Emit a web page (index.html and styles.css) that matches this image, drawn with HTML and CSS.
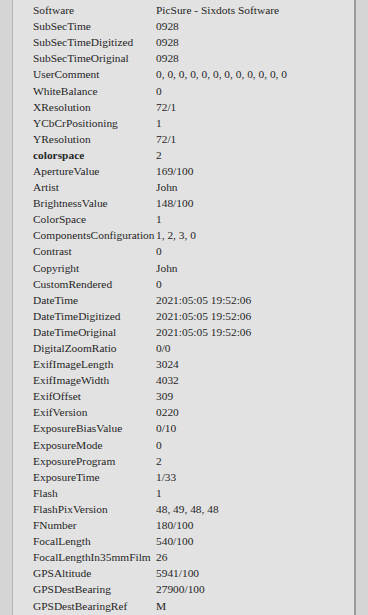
FILE: index.html
```html
<!DOCTYPE html>
<html lang="en">
<head>
  <meta charset="UTF-8" />
  <meta name="viewport" content="width=device-width, initial-scale=1.0"/>
  <title>EXIF data</title>
  <link rel="stylesheet" href="styles.css">
</head>
<body>
  <div class="panel">
    <table class="exif">
      <tr><td>Software</td><td>PicSure - Sixdots Software</td></tr>
      <tr><td>SubSecTime</td><td>0928</td></tr>
      <tr><td>SubSecTimeDigitized</td><td>0928</td></tr>
      <tr><td>SubSecTimeOriginal</td><td>0928</td></tr>
      <tr><td>UserComment</td><td>0, 0, 0, 0, 0, 0, 0, 0, 0, 0, 0, 0</td></tr>
      <tr><td>WhiteBalance</td><td>0</td></tr>
      <tr><td>XResolution</td><td>72/1</td></tr>
      <tr><td>YCbCrPositioning</td><td>1</td></tr>
      <tr><td>YResolution</td><td>72/1</td></tr>
      <tr><td><b>colorspace</b></td><td>2</td></tr>
      <tr><td>ApertureValue</td><td>169/100</td></tr>
      <tr><td>Artist</td><td>John</td></tr>
      <tr><td>BrightnessValue</td><td>148/100</td></tr>
      <tr><td>ColorSpace</td><td>1</td></tr>
      <tr><td>ComponentsConfiguration</td><td>1, 2, 3, 0</td></tr>
      <tr><td>Contrast</td><td>0</td></tr>
      <tr><td>Copyright</td><td>John</td></tr>
      <tr><td>CustomRendered</td><td>0</td></tr>
      <tr><td>DateTime</td><td>2021:05:05 19:52:06</td></tr>
      <tr><td>DateTimeDigitized</td><td>2021:05:05 19:52:06</td></tr>
      <tr><td>DateTimeOriginal</td><td>2021:05:05 19:52:06</td></tr>
      <tr><td>DigitalZoomRatio</td><td>0/0</td></tr>
      <tr><td>ExifImageLength</td><td>3024</td></tr>
      <tr><td>ExifImageWidth</td><td>4032</td></tr>
      <tr><td>ExifOffset</td><td>309</td></tr>
      <tr><td>ExifVersion</td><td>0220</td></tr>
      <tr><td>ExposureBiasValue</td><td>0/10</td></tr>
      <tr><td>ExposureMode</td><td>0</td></tr>
      <tr><td>ExposureProgram</td><td>2</td></tr>
      <tr><td>ExposureTime</td><td>1/33</td></tr>
      <tr><td>Flash</td><td>1</td></tr>
      <tr><td>FlashPixVersion</td><td>48, 49, 48, 48</td></tr>
      <tr><td>FNumber</td><td>180/100</td></tr>
      <tr><td>FocalLength</td><td>540/100</td></tr>
      <tr><td>FocalLengthIn35mmFilm</td><td>26</td></tr>
      <tr><td>GPSAltitude</td><td>5941/100</td></tr>
      <tr><td>GPSDestBearing</td><td>27900/100</td></tr>
      <tr><td>GPSDestBearingRef</td><td>M</td></tr>
    </table>
  </div>
</body>
</html>
```

FILE: styles.css
```css
body {
  margin: 0;
  padding: 0;
  background: #d5d5d5;
  font-family: "Liberation Serif", "Times New Roman", serif;
  color: #262626;
  overflow: hidden;
}

.panel {
  margin: 0 12px;
  height: 615px;
  background: #e2e2e2;
  border-left: 1px solid #b4b4b4;
  border-right: 2px solid #9a9a9a;
  padding: 2px 0 0 20px;
  box-sizing: border-box;
}

.exif {
  border-collapse: collapse;
  font-size: 11.4px;
}

.exif td {
  height: 16.1px;
  padding: 0;
  line-height: 16px;
  white-space: nowrap;
  vertical-align: middle;
}

.exif td:first-child {
  width: 123px;
}
```
